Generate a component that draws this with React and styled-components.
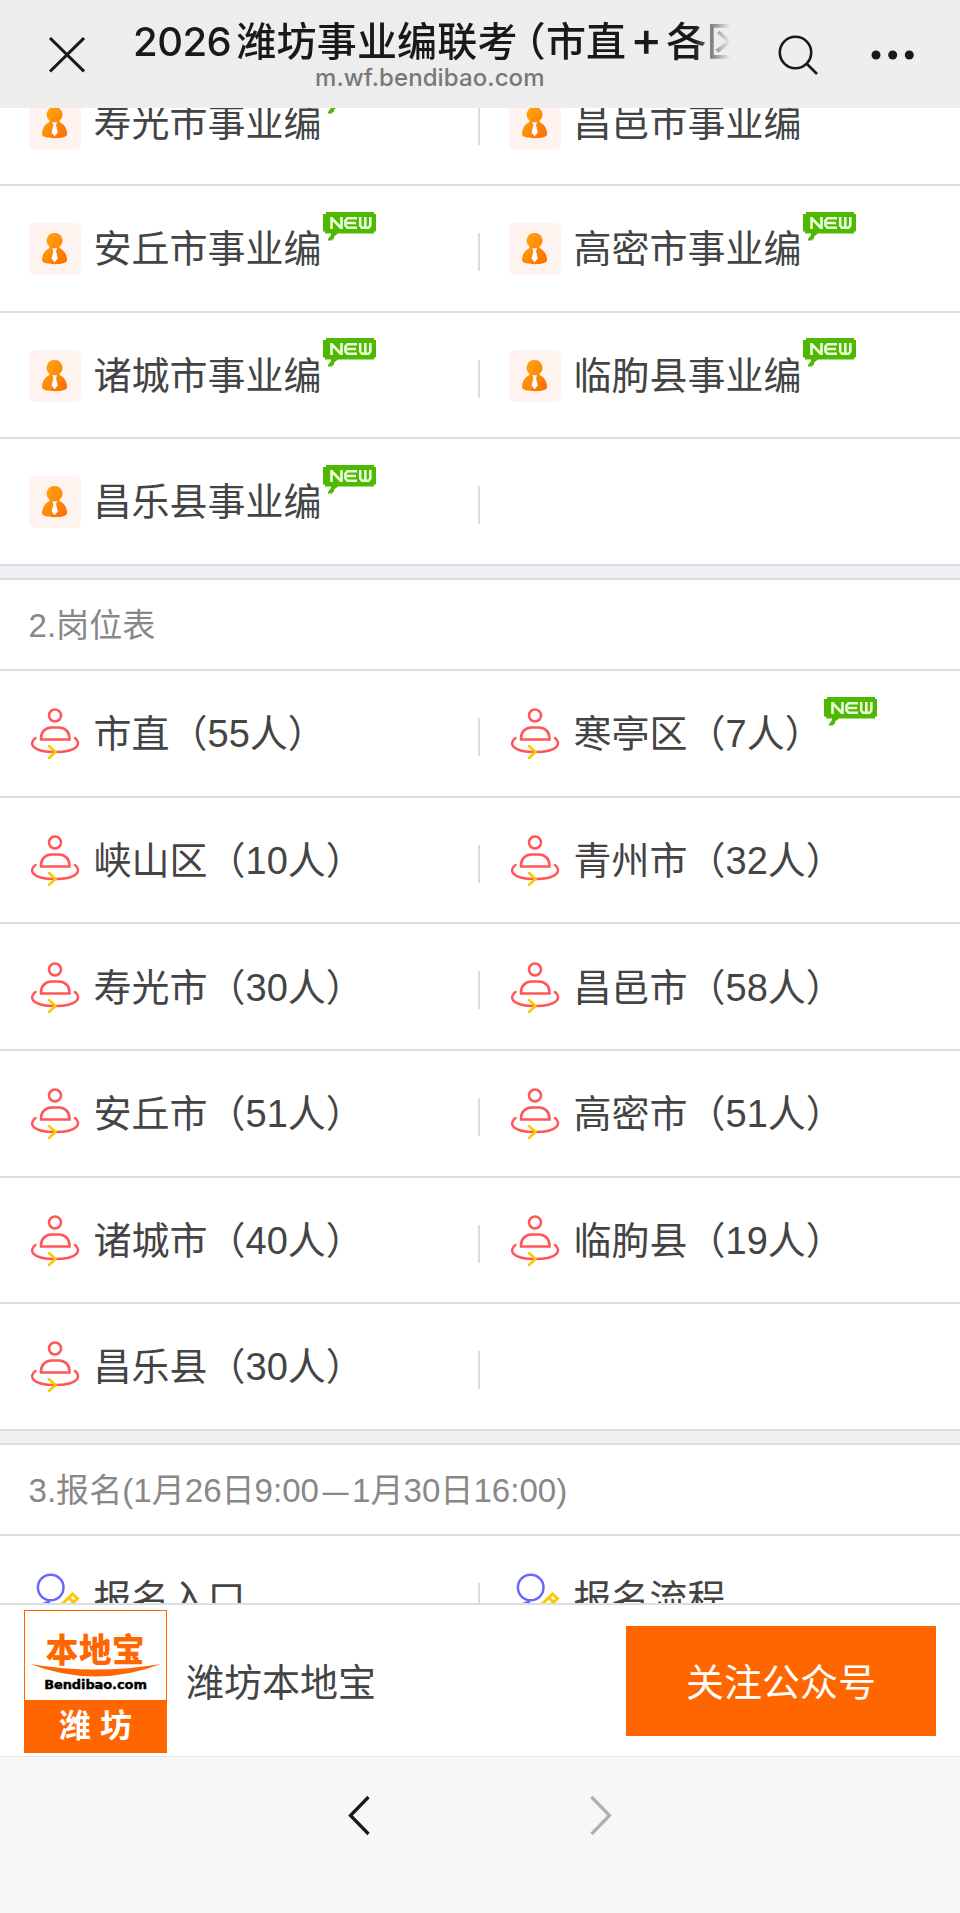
import styled, {createGlobalStyle, css} from 'styled-components'

const GlobalStyle = createGlobalStyle`
  * {
    box-sizing: border-box;
  }

  body {
    margin: 0;
    background: #fff;
    color: #444;
    font-family: 'Liberation Sans', 'Noto Sans CJK SC', sans-serif;
  }

  svg {
    display: block;
    flex: none;
  }
`

const Page = styled.div`
  display: flex;
  flex-direction: column;
  width: 960px;
  height: 1913px;
  overflow: hidden;
`

const Header = styled.header`
  display: flex;
  flex: none;
  height: 107.5px;
  padding-left: 48px;
  background: linear-gradient(100deg, #efeeec 0, #ededed 30%, #eeeeee 100%);
  color: #191919;

  .close {
    margin-top: 36px;
  }

  .search {
    margin: 34px 0 0 47px;
  }

  .more {
    margin: 49px 0 0 52px;
  }
`

const Heading = styled.div`
  width: 597px;
  margin-left: 48px;
  padding-top: 15px;
  font-family: Inter, 'Noto Sans CJK SC', sans-serif;
`

const PageTitle = styled.h1`
  margin: 0;
  height: 54px;
  line-height: 54px;
  font-size: 40px;
  font-weight: 500;
  letter-spacing: 0.2px;
  white-space: nowrap;
  overflow: hidden;
  mask-image: linear-gradient(90deg, #000 94%, transparent 100%);
`

const Year = styled.span`
  letter-spacing: -0.5px;
  margin-right: 5px;
`

const Paren = styled.span`
  margin-left: 8px;
  font-feature-settings: 'halt';
`

const Plus = styled.span`
  display: inline-block;
  width: 40px;
  line-height: 1;
  font-size: 48px;
  letter-spacing: 0;
  text-indent: 4px;
`

const Host = styled.div`
  margin-top: -4px;
  padding-left: 182px;
  line-height: 26px;
  font-size: 24px;
  font-weight: 500;
  letter-spacing: 0.1px;
  color: #787878;
`

const Main = styled.main`
  flex: 1;
  min-height: 0;
  overflow: hidden;
`

const List = styled.div`
  margin-top: -48px;
  background: #efeff4;
`

const Section = styled.section`
  background: #fff;

  & + & {
    border-top: 2px solid #ddd;
    margin-top: 12.4px;
  }
`

const SectionTitle = styled.h2`
  margin: 0;
  height: 91px;
  padding-left: 28.5px;
  border-bottom: 2px solid #ddd;
  line-height: 92px;
  font-size: 33.1px;
  font-weight: 400;
  color: #888;
`

const Dash = styled.span`
  display: inline-block;
  transform: scaleX(0.78);
`

const Row = styled.div`
  display: flex;
  height: 126.6px;
  border-bottom: 2px solid #ddd;
`

const Cell = styled.div`
  display: flex;
  align-items: center;
  width: 480px;
  padding: 1.5px 0 0 29px;
  font-size: 38px;
  line-height: 50px;

  ${({$divided}) => $divided && css`
    background: linear-gradient(#ddd, #ddd) no-repeat 478px 47px / 2px 38px;
  `}
`

const Label = styled.span`
  margin-left: 12.5px;
  white-space: nowrap;
`

const Badge = styled.span`
  align-self: flex-start;
  margin: 24px 0 0 1px;
`

const Follow = styled.footer`
  display: flex;
  align-items: center;
  flex: none;
  height: 153px;
  padding: 0 24px;
  border-top: 2px solid #ddd;
  background: #fff;
`

const Logo = styled.div`
  display: flex;
  flex-direction: column;
  align-items: center;
  width: 143px;
  height: 143px;
  margin-top: 2px;
  border: 1px solid #f60;
  text-align: center;
`

const LogoName = styled.div`
  margin-top: 21px;
  height: 32px;
  line-height: 38px;
  font-size: 32.5px;
  font-weight: 900;
  letter-spacing: 0.6px;
  color: #f60;
`

const LogoDomain = styled.div`
  height: 24px;
  font: 900 13px/16px 'DejaVu Sans', sans-serif;
  letter-spacing: -0.1px;
  -webkit-text-stroke: 0.4px #000;
  color: #000;
`

const LogoCity = styled.div`
  align-self: stretch;
  height: 52px;
  background: #f60;
  color: #fff;
  line-height: 53px;
  font-size: 32px;
  font-weight: 700;
`

const Account = styled.div`
  flex: 1;
  margin-left: 19px;
  padding-bottom: 2px;
  font-size: 38px;
`

const FollowButton = styled.button`
  width: 310px;
  height: 110px;
  padding: 0 0 2px;
  border: 0;
  background: #f60;
  color: #fff;
  font: inherit;
  font-size: 38px;
`

const Toolbar = styled.nav`
  display: flex;
  justify-content: center;
  flex: none;
  gap: 220px;
  height: 157px;
  padding-top: 38px;
  border-top: 1px solid #e5e5e5;
  background: #f7f7f7;
`

const CloseIcon = () => (
  <svg className="close" width="37" height="38" viewBox="0 0 37 38" fill="none" stroke="currentColor" strokeWidth="3.1">
    <path d="M2 2 36 35.5M36 2 2 35.5"/>
  </svg>
)

const SearchIcon = () => (
  <svg className="search" width="42" height="42" viewBox="0 0 42 42" fill="none" stroke="currentColor" strokeWidth="2.6">
    <circle cx="18.5" cy="18.5" r="15.7"/>
    <path d="M29.5 29.5 40 40"/>
  </svg>
)

const MoreIcon = () => (
  <svg className="more" width="44" height="12" viewBox="0 0 44 12" fill="currentColor">
    <circle cx="5" cy="6" r="4.5"/>
    <circle cx="21.7" cy="6" r="4.5"/>
    <circle cx="38.3" cy="6" r="4.5"/>
  </svg>
)

const PersonIcon = () => (
  <svg width="52" height="52" viewBox="0 0 52 52">
    <defs>
      <linearGradient id="person" x1="0" y1="0" x2="1" y2="1">
        <stop offset="0" stopColor="#ffae12"/>
        <stop offset="1" stopColor="#ff6a00"/>
      </linearGradient>
    </defs>
    <rect width="52" height="52" rx="6" fill="#fff3ef"/>
    <path
      fill="url(#person)"
      d="M25.7 10a7.7 7.7 0 0 1 5 13.600c-.5.500-.4 1.200.4 1.700 4.300 2.200 7 6.700 7 11.700 0 2.500-4.200 4.200-12.500 4.200S13 39.500 13 37c0-5 2.700-9.500 7-11.700.8-.5.9-1.200.4-1.700A7.700 7.700 0 0 1 25.700 10Z"
    />
    <path fill="#fff" d="M23.2 25.3h5l-1.200 2.700 1.800 7.500-3.100 3.700-3.100-3.700 1.800-7.500Z"/>
  </svg>
)

const SeatIcon = () => (
  <svg width="52" height="52" viewBox="0 0 52 52" fill="none" stroke="#ff5656" strokeWidth="2.5" strokeLinecap="round">
    <circle cx="26" cy="7.5" r="6"/>
    <path d="M12 31.500v-1.500c0-6 4.500-10.500 10.500-10.500h7.500c6 0 10.500 4.500 10.500 10.500v1.500Z"/>
    <path d="M6.500 30C-.5 35 2 44 26 44s26.500-9 20-14"/>
    <path stroke="#fcc800" d="m20 38 6.500 6-6.500 6"/>
  </svg>
)

const SignupIcon = () => (
  <svg width="52" height="52" viewBox="0 0 52 52" fill="none" stroke="#6668ff" strokeWidth="2.5">
    <circle cx="21.700" cy="14.5" r="12.800"/>
    <path d="M3 50c0-12 8-20 18-21"/>
    <path stroke="#fcc800" strokeWidth="3" d="M31 33 43.500 21 48.500 25.500 36 37.500ZM40 25l4.500 4"/>
  </svg>
)

const NewIcon = () => (
  <svg width="53" height="29" viewBox="0 0 53 29">
    <path fill="#4fb800" d="M3 0h48v2h2v17.500h-2v2H15l-4 3V27H9.500v1.500H5V27l3-4v-1.500H2v-2H0V2h3Z"/>
    <path
      fill="none"
      stroke="#e9ffd9"
      strokeWidth="2.600"
      d="M8.500 17V5M9 6.500l9 9.500M18.500 17V5M34 6.200H24.500l-2 2.300v5l2 2.300H34M24 11h9M37.200 5v8.500l1.800 2.300h6.500l1.800-2.300V5M42.300 5v11"
    />
  </svg>
)

const BackIcon = () => (
  <svg width="22" height="42" viewBox="0 0 22 42" fill="none" stroke="#191919" strokeWidth="3.3">
    <path d="M20.500 2 2.500 20.500 20.500 39"/>
  </svg>
)

const ForwardIcon = () => (
  <svg width="22" height="42" viewBox="0 0 22 42" fill="none" stroke="#b0b0b0" strokeWidth="3.3">
    <path d="M1.500 2l18 18.500-18 18.500"/>
  </svg>
)

const icons = {
  person: PersonIcon,
  seat: SeatIcon,
  signup: SignupIcon,
}

const sections = [
  {
    icon: 'person',
    rows: [
      [{text: '寿光市事业编', isNew: true}, {text: '昌邑市事业编'}],
      [{text: '安丘市事业编', isNew: true}, {text: '高密市事业编', isNew: true}],
      [{text: '诸城市事业编', isNew: true}, {text: '临朐县事业编', isNew: true}],
      [{text: '昌乐县事业编', isNew: true}],
    ],
  },
  {
    title: '2.岗位表',
    icon: 'seat',
    rows: [
      [{text: '市直（55人）'}, {text: '寒亭区（7人）', isNew: true}],
      [{text: '峡山区（10人）'}, {text: '青州市（32人）'}],
      [{text: '寿光市（30人）'}, {text: '昌邑市（58人）'}],
      [{text: '安丘市（51人）'}, {text: '高密市（51人）'}],
      [{text: '诸城市（40人）'}, {text: '临朐县（19人）'}],
      [{text: '昌乐县（30人）'}],
    ],
  },
  {
    title: <>3.报名(1月26日9:00<Dash>—</Dash>1月30日16:00)</>,
    icon: 'signup',
    rows: [
      [{text: '报名入口'}, {text: '报名流程'}],
    ],
  },
]

const Item = ({item, icon, divided}) => {
  const Icon = icons[icon]

  return (
    <Cell $divided={divided}>
      <Icon/>
      <Label>{item.text}</Label>
      {item.isNew && <Badge><NewIcon/></Badge>}
    </Cell>
  )
}

const App = () => (
  <>
    <GlobalStyle/>
    <Page>
      <Header>
        <CloseIcon/>
        <Heading>
          <PageTitle>
            <Year>2026</Year>潍坊事业编联考<Paren>（</Paren>市直<Plus>+</Plus>各区
          </PageTitle>
          <Host>m.wf.bendibao.com</Host>
        </Heading>
        <SearchIcon/>
        <MoreIcon/>
      </Header>
      <Main>
        <List>
          {sections.map(({title, icon, rows}) => (
            <Section key={icon}>
              {title && <SectionTitle>{title}</SectionTitle>}
              {rows.map(([left, right]) => (
                <Row key={left.text}>
                  <Item item={left} icon={icon} divided/>
                  {right && <Item item={right} icon={icon}/>}
                </Row>
              ))}
            </Section>
          ))}
        </List>
      </Main>
      <Follow>
        <Logo>
          <LogoName>本地宝</LogoName>
          <svg width="131" height="13" viewBox="0 0 131 13">
            <path fill="#f60" d="M0 0q65.500 11 131 0-65.500 25-131 0Z"/>
          </svg>
          <LogoDomain>Bendibao.com</LogoDomain>
          <LogoCity>潍 坊</LogoCity>
        </Logo>
        <Account>潍坊本地宝</Account>
        <FollowButton>关注公众号</FollowButton>
      </Follow>
      <Toolbar>
        <BackIcon/>
        <ForwardIcon/>
      </Toolbar>
    </Page>
  </>
)

export default App
